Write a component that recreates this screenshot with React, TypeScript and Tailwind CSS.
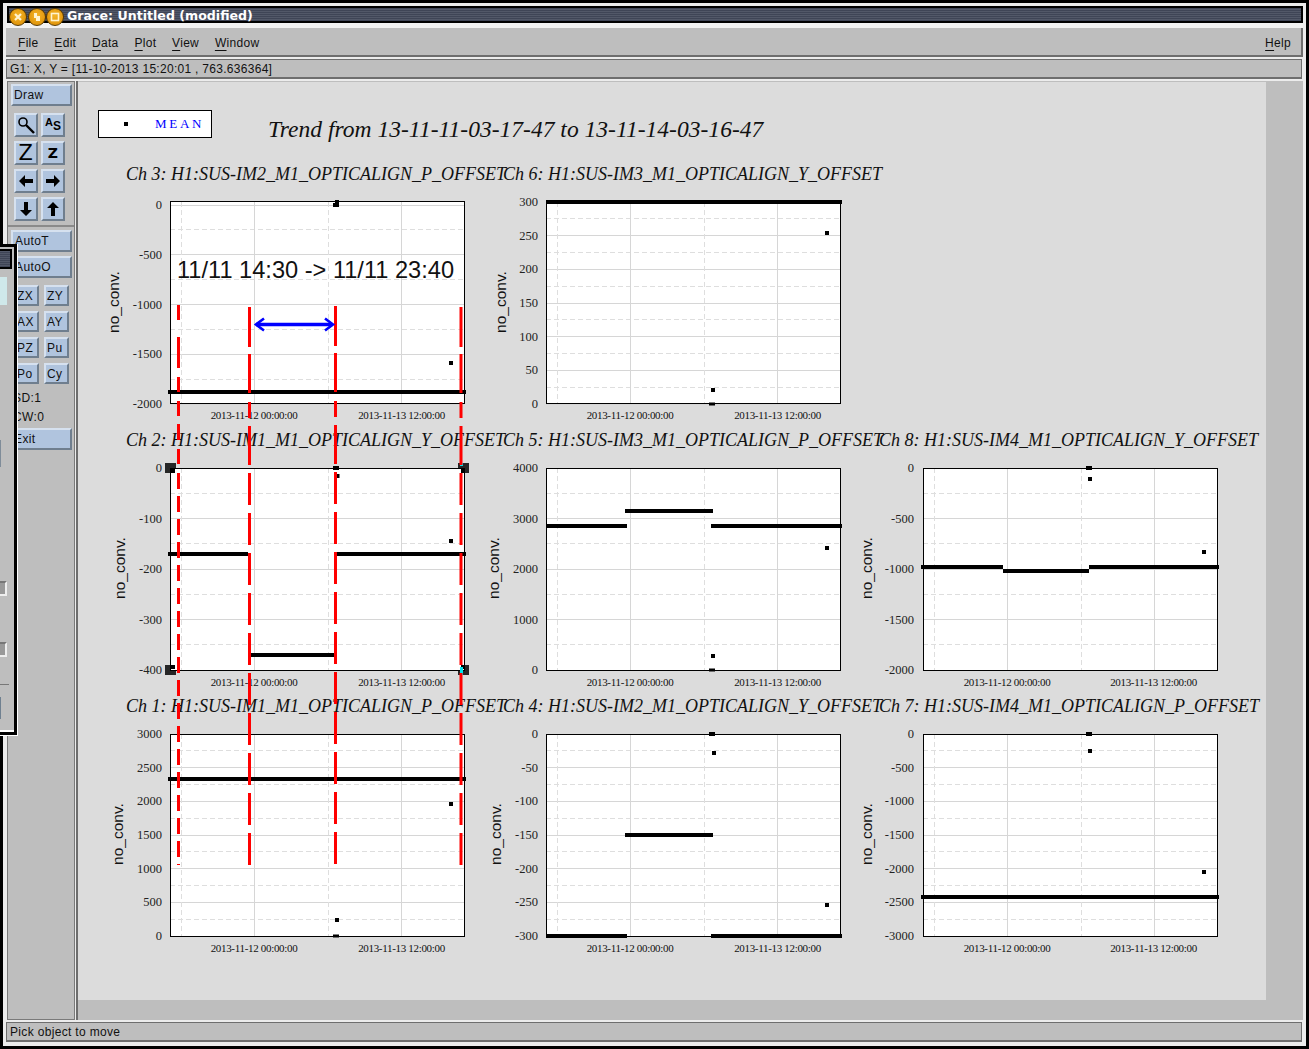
import React from "react";

const bevel = "bg-[#b0c4de] border-2 border-t-[#d6e1ef] border-l-[#d6e1ef] border-r-[#6f7e8e] border-b-[#6f7e8e] text-[12px] tracking-[0.4px] leading-none text-[#111] flex items-center";

type Seg = [number, number, number];
type Pt = [number, number, number?, number?];
type PlotSpec = {
  title: string; tx: number; x: number; y: number; labels: string[]; topInset: number;
  ylab: number; segs: Seg[]; pts: Pt[];
};

const W = 294, H = 202;
const rows = [202, 468, 734];
const cols = [170, 546, 923];

const plots: PlotSpec[] = [
  { title: "Ch 3: H1:SUS-IM2_M1_OPTICALIGN_P_OFFSET", tx: 126, x: cols[0], y: rows[0], labels: ["0", "-500", "-1000", "-1500", "-2000"], topInset: 3, ylab: 114, segs: [[168, 466, 392]], pts: [[337, 203, 4, 6], [336, 205, 6, 4], [451, 363]] },
  { title: "Ch 6: H1:SUS-IM3_M1_OPTICALIGN_Y_OFFSET", tx: 503, x: cols[1], y: rows[0], labels: ["300", "250", "200", "150", "100", "50", "0"], topInset: 0, ylab: 501, segs: [[546, 842, 202]], pts: [[827, 233], [713, 390], [712, 404, 6, 3]] },
  { title: "Ch 2: H1:SUS-IM1_M1_OPTICALIGN_Y_OFFSET", tx: 126, x: cols[0], y: rows[1], labels: ["0", "-100", "-200", "-300", "-400"], topInset: 0, ylab: 120, segs: [[168, 248, 554], [336, 466, 554], [250, 335, 655]], pts: [[336, 468, 6, 4], [338, 476, 3, 4], [451, 541]] },
  { title: "Ch 5: H1:SUS-IM3_M1_OPTICALIGN_P_OFFSET", tx: 503, x: cols[1], y: rows[1], labels: ["4000", "3000", "2000", "1000", "0"], topInset: 0, ylab: 494, segs: [[546, 627, 526], [625, 713, 511], [711, 842, 526]], pts: [[827, 548], [713, 656], [712, 670, 6, 3]] },
  { title: "Ch 8: H1:SUS-IM4_M1_OPTICALIGN_Y_OFFSET", tx: 879, x: cols[2], y: rows[1], labels: ["0", "-500", "-1000", "-1500", "-2000"], topInset: 0, ylab: 867, segs: [[921, 1003, 567], [1003, 1089, 571], [1089, 1219, 567]], pts: [[1089, 468, 6, 4], [1090, 479], [1204, 552]] },
  { title: "Ch 1: H1:SUS-IM1_M1_OPTICALIGN_P_OFFSET", tx: 126, x: cols[0], y: rows[2], labels: ["3000", "2500", "2000", "1500", "1000", "500", "0"], topInset: 0, ylab: 118, segs: [[168, 466, 779]], pts: [[451, 804], [337, 920], [336, 936, 6, 3]] },
  { title: "Ch 4: H1:SUS-IM2_M1_OPTICALIGN_Y_OFFSET", tx: 503, x: cols[1], y: rows[2], labels: ["0", "-50", "-100", "-150", "-200", "-250", "-300"], topInset: 0, ylab: 496, segs: [[546, 627, 936], [711, 842, 936], [625, 713, 835]], pts: [[712, 734, 6, 4], [714, 753], [827, 905]] },
  { title: "Ch 7: H1:SUS-IM4_M1_OPTICALIGN_P_OFFSET", tx: 879, x: cols[2], y: rows[2], labels: ["0", "-500", "-1000", "-1500", "-2000", "-2500", "-3000"], topInset: 0, ylab: 867, segs: [[921, 1219, 897]], pts: [[1089, 734, 6, 4], [1090, 751], [1204, 872]] },
];

const serif = "'Liberation Serif', serif";
const sans = "'Liberation Sans', sans-serif";
const snap = (v: number) => Math.floor(v) + 0.5;

function Plot({ p }: { p: PlotSpec }) {
  const top = p.y + p.topInset;
  const bottom = p.y + H;
  const n = p.labels.length - 1;
  const step = (bottom - top) / n;
  const majors = p.labels.map((_, i) => top + i * step);
  const minors = Array.from({ length: n }, (_, i) => top + (i + 0.5) * step);
  const boxY = p.y === 202 ? 201.5 : p.y + 0.5;
  const boxX = p.x + 0.5;
  return (
    <g>
      <rect x={p.x} y={boxY} width={W} height={H} fill="#fff" />
      {majors.map((y, i) => <line key={i} x1={p.x} x2={p.x + W} y1={snap(y)} y2={snap(y)} stroke="#d6d6d6" strokeWidth={1} />)}
      {minors.map((y, i) => <line key={i} x1={p.x} x2={p.x + W} y1={snap(y)} y2={snap(y)} stroke="#dedede" strokeDasharray="5 3" />)}
      {[84, 231].map((d) => <line key={d} x1={p.x + d + 0.5} x2={p.x + d + 0.5} y1={p.y} y2={p.y + H} stroke="#d6d6d6" />)}
      {[11, 158].map((d) => <line key={d} x1={p.x + d + 0.5} x2={p.x + d + 0.5} y1={p.y} y2={p.y + H} stroke="#dedede" strokeDasharray="5 3" />)}
      <rect x={boxX} y={boxY} width={W} height={H} fill="none" stroke="#000" strokeWidth={1} />
      {p.segs.map(([a, b, y], i) => <rect key={i} x={a} y={y - 2} width={b - a} height={4} fill="#000" />)}
      {p.pts.map(([x, y, w = 4, h = 4], i) => <rect key={i} x={x - w / 2} y={y - h / 2} width={w} height={h} fill="#000" />)}
      {p.labels.map((l, i) => (
        <text key={i} x={p.x - (p.x === 923 ? 9 : 8)} y={majors[i] + 4} textAnchor="end" fontFamily={serif} fontSize={12.5} fill="#222">{l}</text>
      ))}
      {[84, p.x === 923 ? 230.5 : 231.5].map((d, i) => (
        <text key={i} x={p.x + d} y={p.y + H + (p.y === 202 ? 15 : 16)} textAnchor="middle" fontFamily={serif} fontSize={11} letterSpacing={-0.32} fill="#111">
          {i === 0 ? "2013-11-12 00:00:00" : "2013-11-13 12:00:00"}
        </text>
      ))}
      <text x={p.tx} y={p.y - 22} fontFamily={serif} fontStyle="italic" fontSize={18} fill="#111">{p.title}</text>
      <text transform={`translate(${p.ylab + 5} ${p.y + 100}) rotate(-90)`} textAnchor="middle" fontFamily={sans} fontSize={15.5} fill="#111">no_conv.</text>
    </g>
  );
}

function RedLine({ x, first, rest, end, dash }: { x: number; first: [number, number][]; rest: number; end: number; dash: string }) {
  return (
    <g stroke="#ff0000" strokeWidth={3}>
      {first.map(([a, b]) => <line key={a} x1={x} x2={x} y1={a} y2={b} />)}
      <line x1={x} x2={x} y1={rest} y2={end} strokeDasharray={dash} />
    </g>
  );
}

function Canvas() {
  const handles = [[165, 463], [458, 463], [165, 665], [458, 665]];
  const inner = [[171, 469], [461, 469], [171, 665], [461, 665]];
  const main: [number, number][] = [[307, 347], [354, 393], [402, 418], [426, 465]];
  return (
    <svg viewBox="78 82 1188 918" width={1188} height={918} className="block">
      <rect x={98.5} y={110.5} width={113} height={27} fill="#fff" stroke="#000" />
      <rect x={124} y={122} width={4} height={4} fill="#000" />
      <text x={155} y={128} fontFamily={serif} fontSize={13} letterSpacing={2.7} fill="#0000ff">MEAN</text>
      <text x={268} y={137} fontFamily={serif} fontStyle="italic" fontSize={23.55} fill="#111">Trend from 13-11-11-03-17-47 to 13-11-14-03-16-47</text>
      {handles.map(([x, y], i) => <rect key={i} x={x} y={y} width={11} height={10} fill="#262626" />)}
      {plots.map((p, i) => <Plot key={i} p={p} />)}
      {inner.map(([x, y], i) => <rect key={i} x={x} y={y} width={4} height={4} fill="#000" />)}
      <rect x={460} y={463} width={3} height={3} fill="#00e5ee" />
      <rect x={460} y={667} width={3} height={8} fill="#00e5ee" />
      <text x={177} y={278} fontFamily={sans} fontSize={23.6} fill="#111">11/11 14:30 -&gt; 11/11 23:40</text>
      <RedLine x={178.5} first={[[305, 320], [337, 368], [377, 392], [401, 416], [424, 440], [449, 464]]} rest={473} end={865} dash="16 7" />
      <RedLine x={249.5} first={main} rest={473} end={868} dash="32 8" />
      <RedLine x={335.5} first={main.map(([a, b]) => [a - 1, b - 1] as [number, number])} rest={472} end={868} dash="32 8" />
      <RedLine x={461} first={main} rest={473} end={868} dash="32 8" />
      <line x1={256} x2={332} y1={324.5} y2={324.5} stroke="#0000ff" strokeWidth={3.4} />
      <polyline points="264,318.5 256,324.5 264,330.5" fill="none" stroke="#0000ff" strokeWidth={2.6} />
      <polyline points="325,318.5 333,324.5 325,330.5" fill="none" stroke="#0000ff" strokeWidth={2.6} />
    </svg>
  );
}

function Ic({ children }: { children: React.ReactNode }) {
  return <div className={`${bevel} w-[24px] h-[24px] justify-center`}>{children}</div>;
}

function Arrow({ dir }: { dir: number }) {
  return (
    <svg width="18" height="18" viewBox="0 0 18 18" style={{ transform: `rotate(${dir}deg)` }}>
      <path d="M2 9 L8 3 V7 H16 V11 H8 V15 Z" fill="#000" />
    </svg>
  );
}

function Menu({ k, rest, cls = "" }: { k: string; rest: string; cls?: string }) {
  return (
    <span className={cls}>
      <span className="underline underline-offset-[3px]">{k}</span>{rest}
    </span>
  );
}

export default function App() {
  return (
    <div className="relative w-[1309px] h-[1049px] overflow-hidden bg-black p-[3px] font-['Liberation_Sans',sans-serif] text-[#111]">
      <div className="flex h-full flex-col bg-[#ececec] pl-[3px] pr-[3px] pt-[3px] pb-[4px]">
        {/* title bar */}
        <div className="relative ml-[1px] flex h-[17px] shrink-0 items-center border-2 border-black bg-[repeating-linear-gradient(0deg,#3f4556_0px,#3f4556_1px,#525868_1px,#525868_2px)]">
          <span className="absolute left-[58px] top-[-1px] font-['DejaVu_Sans',sans-serif] text-[12.6px] font-bold leading-[17px] text-white whitespace-nowrap">Grace: Untitled (modified)</span>
        </div>
        <div className="h-[5px] shrink-0 bg-[#f2f2f2]" />
        {/* menu */}
        <div className="flex h-[29px] shrink-0 items-center gap-[15.8px] border-r-2 border-b-2 border-[#6e6e6e] bg-[#bebebe] pl-[12px] pr-[10px] pt-[2px] text-[12px] tracking-[0.3px]">
          <Menu k="F" rest="ile" />
          <Menu k="E" rest="dit" />
          <Menu k="D" rest="ata" />
          <Menu k="P" rest="lot" />
          <Menu k="V" rest="iew" />
          <Menu k="W" rest="indow" />
          <Menu k="H" rest="elp" cls="ml-auto" />
        </div>
        {/* locator */}
        <div className="mt-[2px] mr-[1px] flex h-[20px] shrink-0 items-center border border-b-2 border-[#6e6e6e] bg-[#bebebe] pl-[3px] text-[12px] tracking-[0.29px]">
          G1: X, Y = [11-10-2013 15:20:01 , 763.636364]
        </div>
        {/* main */}
        <div className="mt-[2px] flex min-h-0 flex-1">
          <div className="ml-[1px] flex w-[68px] shrink-0 flex-col border border-[#7a7a7a] bg-[#bebebe]">
            <div className="h-[145px] shrink-0 border-b-2 border-[#8a8a8a] pl-[3px] pt-[2px]">
              <div className={`${bevel} h-[22px] w-[61px] pl-[1px]`}>Draw</div>
              <div className="mt-[7px] ml-[3px] grid w-[51px] grid-cols-[24px_24px] gap-x-[3px] gap-y-[4px]">
                <Ic>
                  <svg width="20" height="20" viewBox="0 0 20 20" fill="none" stroke="#000">
                    <circle cx="7" cy="7" r="4" strokeWidth="1.6" />
                    <line x1="10" y1="10" x2="18" y2="18" strokeWidth="2.4" />
                  </svg>
                </Ic>
                <Ic>
                  <span className="relative block h-[20px] w-[20px] font-bold text-black">
                    <span className="absolute left-[2px] top-[2px] text-[11px]">A</span>
                    <span className="absolute left-[10px] top-[5px] text-[12px]">S</span>
                  </span>
                </Ic>
                <Ic><span className="font-['DejaVu_Sans',sans-serif] text-[21px] leading-none text-black">Z</span></Ic>
                <Ic><span className="font-['DejaVu_Sans',sans-serif] text-[14px] font-bold leading-none text-black">Z</span></Ic>
                <Ic><Arrow dir={0} /></Ic>
                <Ic><Arrow dir={180} /></Ic>
                <Ic><Arrow dir={270} /></Ic>
                <Ic><Arrow dir={90} /></Ic>
              </div>
            </div>
            <div className="flex-1 pl-[3px] pt-[3px] text-[12px] tracking-[0.4px]">
              <div className={`${bevel} h-[22px] w-[61px] pl-[2px]`}>AutoT</div>
              <div className={`${bevel} mt-[4px] h-[22px] w-[61px] pl-[2px]`}>AutoO</div>
              <div className="mt-[7px] ml-[3px] grid w-[55px] grid-cols-[25px_25px] gap-x-[5px] gap-y-[5px]">
                {["ZX", "ZY", "AX", "AY", "PZ", "Pu", "Po", "Cy"].map((t) => (
                  <div key={t} className={`${bevel} h-[21px] pl-[1px]`}>{t}</div>
                ))}
              </div>
              <div className="mt-[5px] ml-[2px] flex h-[18px] items-center">SD:1</div>
              <div className="mt-[1px] ml-[2px] flex h-[18px] items-center">CW:0</div>
              <div className={`${bevel} mt-[2px] h-[22px] w-[61px] pl-[1px]`}>Exit</div>
            </div>
          </div>
          <div className="ml-[1px] w-[2px] shrink-0 bg-[#6e6e6e]" />
          <div className="flex-1 overflow-hidden bg-[#bebebe] pt-[1px]">
            <div className="w-[1188px] bg-[#dcdcdc]">
              <Canvas />
            </div>
          </div>
        </div>
        {/* bottom status */}
        <div className="mt-[2px] mr-[1px] flex h-[20px] shrink-0 items-center border border-b-2 border-[#6e6e6e] bg-[#bebebe] pl-[3px] text-[12px] tracking-[0.33px]">
          Pick object to move
        </div>
      </div>

      {/* overlapping dialog */}
      <div className="absolute left-0 top-[244px] h-[492px] w-[18px] border-r border-b border-white">
        <div className="flex h-full flex-col border-t-[3px] border-r-[3px] border-b-[3px] border-black bg-[#bebebe]">
          <div className="mt-[2px] h-[20px] w-[12px] border-t-2 border-r-2 border-b-2 border-black bg-[repeating-linear-gradient(0deg,#3f4556_0px,#3f4556_1px,#525868_1px,#525868_2px)]" />
          <div className="mt-[8px] h-[28px] w-[7px] bg-[#cfe8ea]" />
          <div className="mt-[135px] h-[27px] w-[1px] bg-[#7f8c99]" />
          <div className="mt-[114px] h-[15px] w-[7px] border-r-2 border-b-2 border-t-2 border-[#eeeeee] border-t-[#777777] bg-[#999999]" />
          <div className="mt-[46px] h-[15px] w-[7px] border-r-2 border-b-2 border-t-2 border-[#eeeeee] border-t-[#777777] bg-[#999999]" />
          <div className="mt-[27px] h-[1px] w-[9px] bg-[#777777]" />
          <div className="mt-[12px] h-[22px] w-[1px] bg-[#6f8090]" />
          <div className="mt-auto h-[2px] w-full bg-white" />
        </div>
      </div>

      {/* window buttons */}
      {[18, 37, 55].map((x, i) => (
        <div key={x} className="absolute top-[8px] flex h-[18px] w-[18px] items-center justify-center rounded-full border border-[#5a3a00] bg-[radial-gradient(circle_at_50%_40%,#f5b52a,#d98a00)]" style={{ left: x - 9 }}>
          <svg width="10" height="10" viewBox="0 0 10 10">
            {i === 0 && <path d="M2 2 L8 8 M8 2 L2 8" stroke="#fff3d0" strokeWidth="2.2" />}
            {i === 1 && <path d="M2 1 H5 V4 H8 V9 H4 V6 H2 Z" fill="#fff3d0" />}
            {i === 2 && <rect x="1.5" y="1.5" width="7" height="7" fill="none" stroke="#fff3d0" strokeWidth="1.6" />}
          </svg>
        </div>
      ))}
    </div>
  );
}
